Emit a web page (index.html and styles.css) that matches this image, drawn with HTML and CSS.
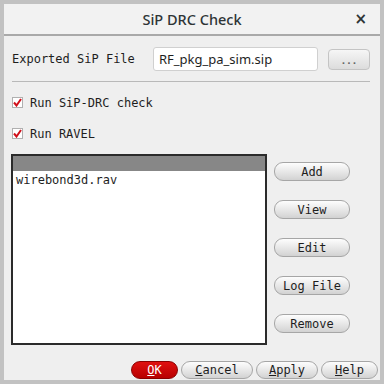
FILE: index.html
```html
<!DOCTYPE html>
<html lang="en">
<head>
    <meta charset="UTF-8">
    <title>SiP DRC Check</title>
    <link rel="stylesheet" href="styles.css">
</head>
<body>
    <div class="window">
        <div class="titlebar">
            <span class="title">SiP DRC Check</span>
            <span class="close">&times;</span>
        </div>
        <div class="content">
            <div class="file-row">
                <span class="file-label">Exported SiP File</span>
                <div class="file-input">RF_pkg_pa_sim.sip</div>
                <button class="browse">...</button>
            </div>
            <div class="separator"></div>
            <label class="check-row">
                <span class="checkbox">
                    <svg width="9" height="9" viewBox="0 0 9 9"><path d="M1 4.5 L3.5 7.5 L8 1" fill="none" stroke="#d0101a" stroke-width="2"/></svg>
                </span>
                Run SiP-DRC check
            </label>
            <label class="check-row">
                <span class="checkbox">
                    <svg width="9" height="9" viewBox="0 0 9 9"><path d="M1 4.5 L3.5 7.5 L8 1" fill="none" stroke="#d0101a" stroke-width="2"/></svg>
                </span>
                Run RAVEL
            </label>
            <div class="list-area">
                <div class="listbox">
                    <div class="list-header"></div>
                    <div class="list-item">wirebond3d.rav</div>
                </div>
                <div class="side-buttons">
                    <button class="pill">Add</button>
                    <button class="pill">View</button>
                    <button class="pill">Edit</button>
                    <button class="pill">Log File</button>
                    <button class="pill">Remove</button>
                </div>
            </div>
            <div class="footer">
                <button class="pill ok"><u>O</u>K</button>
                <button class="pill cancel"><u>C</u>ancel</button>
                <button class="pill apply"><u>A</u>pply</button>
                <button class="pill help"><u>H</u>elp</button>
            </div>
        </div>
    </div>
</body>
</html>
```

FILE: styles.css
```css
body {
    margin: 0;
    background-color: #c2c2c2;
    font-family: "DejaVu Sans Mono", monospace;
    font-size: 12px;
    color: #1e1e1e;
}
.window {
    margin: 4px;
    width: 376px;
    height: 376px;
    background-color: #efefef;
    display: flex;
    flex-direction: column;
}
.titlebar {
    height: 30px;
    border-bottom: 2px solid #a9a9a9;
    background-color: #f2f2f2;
    position: relative;
    display: flex;
    align-items: center;
    justify-content: center;
}
.title {
    font-family: "Noto Sans", sans-serif;
    font-weight: 500;
    font-size: 14.5px;
    color: #2e3436;
}
.close {
    position: absolute;
    right: 13px;
    top: 6px;
    font-family: "DejaVu Sans", sans-serif;
    font-weight: bold;
    font-size: 15px;
    color: #2e3436;
}
.content {
    padding: 11px 10px 0 8px;
    display: flex;
    flex-direction: column;
    flex: 1;
}
.file-row {
    display: flex;
    align-items: center;
    height: 24px;
}
.file-label {
    width: 141px;
}
.file-input {
    width: 158px;
    height: 22px;
    line-height: 22px;
    padding-left: 5px;
    background-color: #fff;
    border: 1px solid #d0d0d0;
    border-radius: 3px;
    font-family: "Noto Sans", sans-serif;
    font-size: 13px;
}
.browse {
    margin-left: 10px;
    width: 42px;
    height: 21px;
    border: 1px solid #c4c4c4;
    border-radius: 4px;
    background: linear-gradient(#f6f6f6, #dcdcdc);
    font-family: "DejaVu Sans", sans-serif;
    font-weight: bold;
    font-size: 9px;
    letter-spacing: 2px;
    color: #666;
    padding: 4px 0 0 2px;
}
.separator {
    margin: 10px 0 10px 0;
    height: 1px;
    background-color: #b9b9b9;
}
.check-row {
    display: flex;
    align-items: center;
    box-sizing: border-box;
    height: 20px;
    margin-bottom: 11px;
    padding-top: 1px;
}
.checkbox {
    width: 9px;
    height: 9px;
    border: 1px solid #b0b0b0;
    background-color: #fff;
    margin-right: 7px;
    display: flex;
}
.list-area {
    display: flex;
    align-items: flex-start;
}
.listbox {
    margin-left: -1px;
    width: 252px;
    height: 187px;
    border: 2px solid #2b2b2b;
    background-color: #fff;
}
.list-header {
    height: 15px;
    background-color: #878787;
}
.list-item {
    padding: 2px 0 0 3px;
}
.side-buttons {
    margin-left: 7px;
    margin-top: 8px;
    display: flex;
    flex-direction: column;
    gap: 19px;
}
.pill {
    height: 19px;
    padding: 0;
    border: 1px solid #a6a6a6;
    border-radius: 9px;
    background: linear-gradient(#fdfdfd, #e4e4e4 60%, #d2d2d2);
    font-family: "DejaVu Sans Mono", monospace;
    font-size: 12px;
    color: #1e1e1e;
}
.side-buttons .pill {
    width: 76px;
}
.footer {
    margin-top: auto;
    margin-bottom: 1px;
    margin-right: -8px;
    display: flex;
    justify-content: flex-end;
    gap: 3px;
}
.footer .pill {
    height: 18px;
}
.ok {
    width: 47px;
    border-color: #8a0000;
    background: linear-gradient(#e01010, #b80000);
    color: #fff;
}
.cancel {
    width: 72px;
}
.apply {
    width: 62px;
}
.help {
    width: 57px;
}
```
